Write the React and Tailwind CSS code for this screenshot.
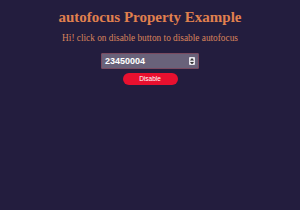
export default function App() {
  return (
    <div className="min-h-[210px] w-[300px] bg-[#231d3e] flex flex-col items-center">
      <h1 className="mt-[8px] text-[15px] leading-[18px] font-bold text-[#e0804e] font-['Liberation_Serif',serif]">
        autofocus Property Example
      </h1>
      <p className="mt-[7px] text-[9.3px] leading-[11px] text-[#d9845c] font-['Liberation_Serif',serif]">
        Hi! click on disable button to disable autofocus
      </p>
      <div className="mt-[9px] w-[98px] h-[16px] bg-[#69627a] border border-[#7a4a60] rounded-[1px] flex items-center pl-[3px] pr-[3px]">
        <span className="flex-1 text-[9px] font-bold text-white leading-none font-['Liberation_Sans',sans-serif]">23450004</span>
        <div className="w-[6px] h-[8px] bg-[#e8e6ec] rounded-[1px] flex flex-col items-center justify-center gap-[1px]">
          <svg width="4" height="2.5" viewBox="0 0 5 3"><path d="M0 3 L2.5 0 L5 3Z" fill="#333" /></svg>
          <svg width="4" height="2.5" viewBox="0 0 5 3"><path d="M0 0 L2.5 3 L5 0Z" fill="#333" /></svg>
        </div>
      </div>
      <button className="mt-[4px] w-[55px] h-[12px] rounded-full bg-[#e8102f] text-white text-[6.5px] leading-none flex items-center justify-center font-['Liberation_Sans',sans-serif]">
        Disable
      </button>
    </div>
  );
}
